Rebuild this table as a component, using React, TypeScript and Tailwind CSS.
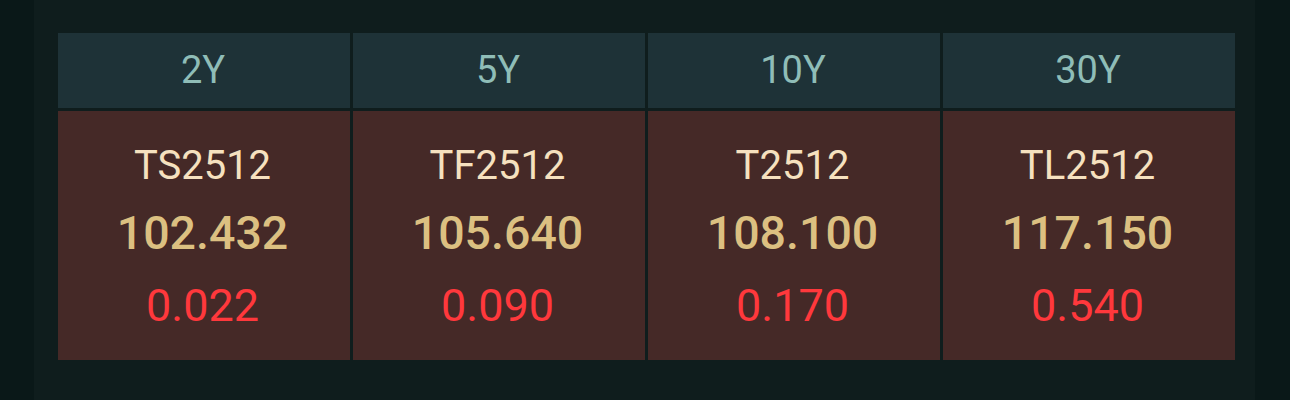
import React from "react";

const items = [
  { tenor: "2Y", code: "TS2512", price: "102.432", chg: "0.022" },
  { tenor: "5Y", code: "TF2512", price: "105.640", chg: "0.090" },
  { tenor: "10Y", code: "T2512", price: "108.100", chg: "0.170" },
  { tenor: "30Y", code: "TL2512", price: "117.150", chg: "0.540" },
];

export default function App() {
  return (
    <div
      className="w-full h-[400px] bg-[#0a1818] flex"
      style={{ fontFamily: "Roboto, 'Noto Sans', sans-serif" }}
    >
      <div className="ml-[34px] w-[1221px] h-full bg-[#0f1d1d] pl-[24px] pt-[33px]">
        <div className="grid grid-cols-4 gap-[3px] w-[1177px]">
          {items.map((it) => (
            <div
              key={it.tenor + "h"}
              className="h-[75px] bg-[#1e3237] text-[#8fbdb7] text-[38px] leading-[75px] text-center pr-[2px]"
            >
              {it.tenor}
            </div>
          ))}
          {items.map((it) => (
            <div
              key={it.tenor + "b"}
              className="h-[249px] bg-[#452927] flex flex-col items-center pt-[31px] pr-[3px]"
            >
              <div className="text-[40px] leading-[48px] text-[#f6e1bf]">{it.code}</div>
              <div className="mt-[11px] text-[46.5px] leading-[64px] font-medium text-[#dcc081]">
                {it.price}
              </div>
              <div className="mt-[9px] text-[45px] leading-[64px] text-[#ff383c]">{it.chg}</div>
            </div>
          ))}
        </div>
      </div>
    </div>
  );
}
